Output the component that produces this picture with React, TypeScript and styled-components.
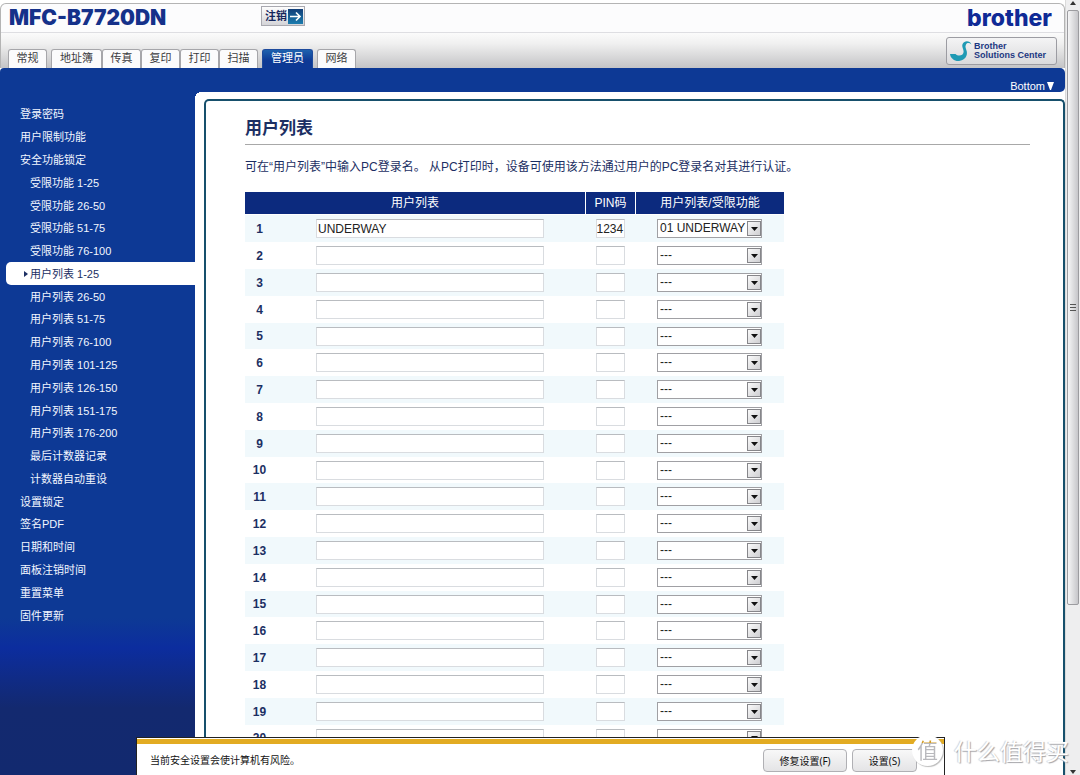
import React from "react";
import styled, { createGlobalStyle } from "styled-components";

const GlobalStyle = createGlobalStyle`
  * { box-sizing: border-box; }
  html, body { margin: 0; padding: 0; overflow: hidden; background: #fff; }
  body, input, select, button { font-family: "Liberation Sans", "Noto Sans CJK SC", sans-serif; }
  ul { list-style: none; margin: 0; padding: 0; }
  a { text-decoration: none; color: inherit; }
`;

const BLUE = "#0d3995";
const NAVY = "#0c2a7e";
const INK = "#1c2f63";

const Screen = styled.div`
  position: relative;
  display: flex;
  height: 100vh;
  overflow: hidden;
`;

const Page = styled.div`
  flex: 1;
  min-width: 0;
  display: flex;
  flex-direction: column;
  padding-top: 3px;
`;

const Header = styled.header`
  flex: none;
  border: 1px solid #b4b4b4;
  border-bottom: 0;
  border-radius: 6px 6px 0 0;
  background: #fcfcfd;
`;

const BrandRow = styled.div`
  display: flex;
  align-items: center;
  height: 28px;
  padding: 0 12px 0 8px;
`;

const Model = styled.h1`
  flex: none;
  width: 252px;
  margin: 0;
  font: 900 21px/28px Inter, "DejaVu Sans", sans-serif;
  color: #15318a;
`;

const Logout = styled.button`
  display: flex;
  align-items: center;
  gap: 1px;
  height: 20px;
  padding: 0 1px 0 3px;
  margin-bottom: 4px;
  border: 1px solid #a9a9b0;
  background: linear-gradient(#fdfdfd, #d4d4d8);
  color: #14265c;
  font-size: 11px;
  font-weight: 700;
  line-height: 16px;
`;

const Logo = styled.span`
  margin-left: auto;
  font: 800 23px/28px Inter, sans-serif;
  color: #0f2a96;
`;

const TabRow = styled.div`
  display: flex;
  justify-content: space-between;
  align-items: flex-start;
  height: 36px;
  padding: 4px 7px 0;
  border-top: 1px solid #dedee2;
  background: linear-gradient(#fbfbfb, #f0f0f0 30%, #c4c4c6);
`;

const Tabs = styled.nav`
  display: flex;
  align-self: flex-end;
`;

const Tab = styled.a<{ $active?: boolean; $gap?: boolean; $wide?: boolean }>`
  width: ${(p) => (p.$wide ? 51 : 39)}px;
  height: 19px;
  margin-left: ${(p) => (p.$gap ? 4 : 0)}px;
  border: 1px solid ${(p) => (p.$active ? "#1d4a9c" : "#a6a6aa")};
  border-bottom: 0;
  border-radius: 3px 3px 0 0;
  background: ${(p) => (p.$active ? `linear-gradient(#1e62ae, ${BLUE} 60%)` : "#fbfbfc")};
  color: ${(p) => (p.$active ? "#fff" : "#3c3c40")};
  font-size: 11px;
  line-height: 16px;
  text-align: center;
`;

const Solutions = styled.a`
  display: flex;
  align-items: center;
  gap: 2px;
  width: 111px;
  height: 28px;
  padding-left: 3px;
  border: 1px solid #9c9ca2;
  border-radius: 3px;
  background: linear-gradient(#f4f4f5, #dadadc);
  color: #1c3782;
  font-size: 9px;
  font-weight: 700;
  line-height: 9px;
  white-space: nowrap;
`;

const Body = styled.div`
  flex: 1;
  min-height: 0;
  display: grid;
  grid-template-columns: 195px 1fr;
  grid-template-rows: 24px 1fr;
`;

const Sidebar = styled.nav`
  grid-row: 1 / 3;
  padding: 35px 0 0 6px;
  border-top-left-radius: 4px;
  background: linear-gradient(${BLUE} 550px, #0c2d9e 580px, #13296f 640px, #12296f);
`;

const Menu = styled.ul`
  display: grid;
  grid-auto-rows: 1fr;
  height: 524px;
`;

const MenuItem = styled.li<{ $sub?: boolean; $active?: boolean }>`
  display: flex;
  align-items: center;
  padding-left: ${(p) => (p.$active ? 18 : p.$sub ? 24 : 14)}px;
  gap: 2px;
  border-radius: 5px 0 0 5px;
  background: ${(p) => (p.$active ? "#fff" : "transparent")};
  color: ${(p) => (p.$active ? INK : "#f2f6ff")};
  font-size: 11px;
  line-height: 16px;
  white-space: nowrap;
`;

const TopBand = styled.div`
  display: flex;
  justify-content: flex-end;
  align-items: center;
  padding: 11px 11px 0 0;
  border-radius: 0 5px 5px 0;
  background: ${BLUE};
  color: #fff;
  font-size: 11px;
  line-height: 12px;
`;

const BottomLink = styled.a`
  display: flex;
  align-items: center;
  gap: 2px;
`;

const Content = styled.div`
  min-height: 0;
  padding: 7px 0 0 9px;
  display: flex;
  background: radial-gradient(circle at 6px 6px, #fff 6px, ${BLUE} 6px) 0 0 / 6px 6px no-repeat, #fff;
`;

const Panel = styled.main`
  flex: 1;
  min-width: 0;
  padding: 16px 33px 0 39px;
  border: 2px solid #17506c;
  border-bottom: 0;
  border-radius: 5px 5px 0 0;
  color: ${INK};
`;

const Title = styled.h2`
  margin: 0;
  padding-bottom: 3px;
  border-bottom: 1px solid #a8a8a8;
  font-size: 17px;
  font-weight: 700;
  line-height: 24px;
`;

const Intro = styled.p`
  margin: 14px 0 16px;
  font-size: 12px;
  line-height: 17px;
`;

const UserTable = styled.table`
  table-layout: fixed;
  width: 539px;
  border-collapse: separate;
  border-spacing: 0;
  font-size: 12px;
`;

const HeadCell = styled.th`
  height: 23px;
  padding: 0;
  border-bottom: 1px solid #fff;
  background: ${NAVY};
  color: #fff;
  font-weight: 400;
  line-height: 20px;
  & + & { border-left: 1px solid #fff; }
`;

const Rows = styled.tbody`
  tr:nth-child(odd) { background: #f1f9fc; }
`;

const Row = styled.tr<{ $short?: boolean }>`
  height: ${(p) => (p.$short ? 26 : 27)}px;
`;

const Cell = styled.td`
  padding: 0;
  line-height: 0;
`;

const NumberCell = styled.th`
  padding: 0 42px 0 0;
  line-height: 16px;
`;

const Field = styled.input<{ $wide?: boolean }>`
  display: block;
  width: ${(p) => (p.$wide ? 228 : 29)}px;
  height: 19px;
  margin: ${(p) => (p.$wide ? "0" : "0 auto")};
  padding: ${(p) => (p.$wide ? "0 1px" : "0")};
  border: 1px solid #d9dce0;
  border-top-color: #b9bcc0;
  border-radius: 0;
  background: #fff;
  color: #222;
  font-size: 12px;
  outline: 0;
`;

const SelectBox = styled.div`
  display: flex;
  width: 105px;
  height: 19px;
  margin: 0 auto;
  padding: 1px 0 1px 1px;
  border: 1px solid #a0a0a4;
  background: #fff;
`;

const Select = styled.select`
  flex: 1;
  min-width: 0;
  appearance: none;
  padding: 0 0 0 1px;
  border: 0;
  background: transparent;
  color: #222;
  font-size: 12px;
  line-height: 15px;
`;

const DropArrow = styled.span`
  flex: none;
  display: flex;
  align-items: center;
  justify-content: center;
  width: 14px;
  border: 1px solid #86868a;
  background: linear-gradient(135deg, #fafafa, #cfcfd2);
`;

const Scrollbar = styled.div`
  flex: none;
  display: flex;
  flex-direction: column;
  align-items: center;
  width: 15px;
  padding: 1px 0;
  border-left: 1px solid #dadada;
  background: #eeeeef;
`;

const Thumb = styled.div`
  flex: 593;
  display: flex;
  align-items: center;
  justify-content: center;
  width: 12px;
  margin-top: 5px;
  border: 1px solid #9c9ca0;
  border-radius: 2px;
  background: linear-gradient(90deg, #f6f6f7, #e0e0e2 45%, #c6c6ca);
`;

const Track = styled.div`
  flex: 165;
`;

const Notice = styled.aside`
  position: absolute;
  left: 136px;
  right: 135px;
  bottom: 0;
  display: flex;
  align-items: center;
  gap: 5px;
  height: 38px;
  padding: 2px 27px 0 13px;
  border: 1px solid #222;
  border-bottom: 0;
  background: linear-gradient(#fff 1px, #e2ab22 1px, #e2ab22 6px, #fff 6px);
  color: #111;
  font-size: 10px;
`;

const NoticeText = styled.span`
  flex: 1;
  padding-top: 4px;
`;

const NoticeButton = styled.button<{ $wide?: boolean }>`
  width: ${(p) => (p.$wide ? 84 : 65)}px;
  height: 23px;
  margin-top: 6px;
  padding: 0;
  border: 1px solid #b0b0b4;
  border-radius: 4px;
  background: linear-gradient(#f8f8f8, #e4e4e6);
  color: #111;
  font-family: "Noto Sans", "Noto Sans CJK SC", sans-serif;
  font-size: 10px;
  line-height: 18px;
`;

const Watermark = styled.div`
  position: absolute;
  right: 11px;
  bottom: 9px;
  display: flex;
  align-items: center;
  gap: 11px;
  color: #fff;
  font: 400 23px/32px "Noto Sans CJK SC", sans-serif;
  text-shadow: 1px 1px 1px #a4a4a8, -1px 0 1px #d0d0d2;
`;

const Seal = styled.span`
  width: 31px;
  height: 31px;
  border-radius: 50%;
  background: #fff;
  box-shadow: 1px 1px 1px #bbb;
  font-size: 21px;
  line-height: 29px;
  text-align: center;
  text-shadow: none;
`;

const SealMark = styled.span`
  background: linear-gradient(#d29a1e 9px, #b9b9bd 9px);
  background-clip: text;
  color: transparent;
`;

const tabs = [
  { label: "常规" },
  { label: "地址簿", gap: true, wide: true },
  { label: "传真" },
  { label: "复印" },
  { label: "打印" },
  { label: "扫描" },
  { label: "管理员", gap: true, wide: true, active: true },
  { label: "网络", gap: true },
];

const menu: { label: string; sub?: boolean; active?: boolean }[] = [
  { label: "登录密码" },
  { label: "用户限制功能" },
  { label: "安全功能锁定" },
  { label: "受限功能 1-25", sub: true },
  { label: "受限功能 26-50", sub: true },
  { label: "受限功能 51-75", sub: true },
  { label: "受限功能 76-100", sub: true },
  { label: "用户列表 1-25", sub: true, active: true },
  { label: "用户列表 26-50", sub: true },
  { label: "用户列表 51-75", sub: true },
  { label: "用户列表 76-100", sub: true },
  { label: "用户列表 101-125", sub: true },
  { label: "用户列表 126-150", sub: true },
  { label: "用户列表 151-175", sub: true },
  { label: "用户列表 176-200", sub: true },
  { label: "最后计数器记录", sub: true },
  { label: "计数器自动重设", sub: true },
  { label: "设置锁定" },
  { label: "签名PDF" },
  { label: "日期和时间" },
  { label: "面板注销时间" },
  { label: "重置菜单" },
  { label: "固件更新" },
];

const users = Array.from({ length: 20 }, (_, i) => ({
  id: i + 1,
  name: i === 0 ? "UNDERWAY" : "",
  pin: i === 0 ? "1234" : "",
  group: i === 0 ? "01 UNDERWAY" : "---",
}));

const Triangle = ({ w, h, d, fill }: { w: number; h: number; d: string; fill: string }) => (
  <svg width={w} height={h} viewBox={`0 0 ${w} ${h}`} aria-hidden="true">
    <path d={d} fill={fill} />
  </svg>
);

export default function App() {
  return (
    <Screen>
      <GlobalStyle />
      <Page>
        <Header>
          <BrandRow>
            <Model>MFC-B7720DN</Model>
            <Logout type="button">
              注销
              <svg width="15" height="15" viewBox="0 0 15 15" aria-hidden="true">
                <defs>
                  <linearGradient id="arrowFill" x1="0" y1="0" x2="0" y2="1">
                    <stop offset="0" stopColor="#123e78" />
                    <stop offset="1" stopColor="#1b7cae" />
                  </linearGradient>
                </defs>
                <rect width="15" height="15" fill="url(#arrowFill)" />
                <path d="M2 7.5H12M8 3.5L12 7.5L8 11.5" fill="none" stroke="#fff" strokeWidth="1.6" />
              </svg>
            </Logout>
            <Logo>brother</Logo>
          </BrandRow>
          <TabRow>
            <Tabs>
              {tabs.map((t) => (
                <Tab key={t.label} href="#" $active={t.active} $gap={t.gap} $wide={t.wide}>
                  {t.label}
                </Tab>
              ))}
            </Tabs>
            <Solutions href="#">
              <svg width="22" height="22" viewBox="0 0 22 22" aria-hidden="true">
                <path
                  d="M21.5 4.5C20 .6 14.500 .2 12.600 4C11.400 6.500 13.800 9.500 13.600 12C13.300 15.500 8.500 17 5.500 14L0 14C.6 19 5.500 21.800 10 20.800C15 19.800 17.600 16 16.800 11.600C16.300 9 14.600 6.500 16 4.400C17.300 2.500 19.500 2.800 21.500 4.500Z"
                  fill="#1f9ab4"
                />
              </svg>
              <span>
                Brother
                <br />
                Solutions Center
              </span>
            </Solutions>
          </TabRow>
        </Header>
        <Body>
          <Sidebar>
            <Menu>
              {menu.map((m) => (
                <MenuItem key={m.label} $sub={m.sub} $active={m.active}>
                  {m.active && <Triangle w={4} h={6} d="M0 0L4 3L0 6Z" fill={INK} />}
                  <a href="#">{m.label}</a>
                </MenuItem>
              ))}
            </Menu>
          </Sidebar>
          <TopBand>
            <BottomLink href="#">
              Bottom
              <Triangle w={7} h={8} d="M0 0H7L4 8H3Z" fill="#fff" />
            </BottomLink>
          </TopBand>
          <Content>
            <Panel>
              <Title>用户列表</Title>
              <Intro>可在“用户列表”中输入PC登录名。 从PC打印时，设备可使用该方法通过用户的PC登录名对其进行认证。</Intro>
              <UserTable>
                <colgroup>
                  <col width="71" />
                  <col width="269" />
                  <col width="50" />
                  <col width="149" />
                </colgroup>
                <thead>
                  <tr>
                    <HeadCell colSpan={2}>用户列表</HeadCell>
                    <HeadCell>PIN码</HeadCell>
                    <HeadCell>用户列表/受限功能</HeadCell>
                  </tr>
                </thead>
                <Rows>
                  {users.map((u) => (
                    <Row key={u.id} $short={u.id % 5 === 0}>
                      <NumberCell scope="row">{u.id}</NumberCell>
                      <Cell>
                        <Field $wide type="text" aria-label={`用户列表 ${u.id}`} defaultValue={u.name} />
                      </Cell>
                      <Cell>
                        <Field type="text" aria-label={`PIN码 ${u.id}`} defaultValue={u.pin} />
                      </Cell>
                      <Cell>
                        <SelectBox>
                          <Select aria-label={`受限功能 ${u.id}`} defaultValue={u.group}>
                            <option>---</option>
                            <option>01 UNDERWAY</option>
                          </Select>
                          <DropArrow>
                            <Triangle w={7} h={4} d="M0 0H7L3.500 4Z" fill="#111" />
                          </DropArrow>
                        </SelectBox>
                      </Cell>
                    </Row>
                  ))}
                </Rows>
              </UserTable>
            </Panel>
          </Content>
        </Body>
      </Page>
      <Scrollbar>
        <Triangle w={6} h={4} d="M3 0L6 4H0Z" fill="#333" />
        <Thumb>
          <svg width="6" height="7" viewBox="0 0 6 7" aria-hidden="true">
            <path d="M0 .5H6M0 3.500H6M0 6.500H6" stroke="#555" />
          </svg>
        </Thumb>
        <Track />
        <Triangle w={6} h={4} d="M0 0H6L3 4Z" fill="#333" />
      </Scrollbar>
      <Notice>
        <NoticeText>当前安全设置会使计算机有风险。</NoticeText>
        <NoticeButton type="button" $wide>
          修复设置(F)
        </NoticeButton>
        <NoticeButton type="button">设置(S)</NoticeButton>
      </Notice>
      <Watermark>
        <Seal>
          <SealMark>值</SealMark>
        </Seal>
        什么值得买
      </Watermark>
    </Screen>
  );
}
